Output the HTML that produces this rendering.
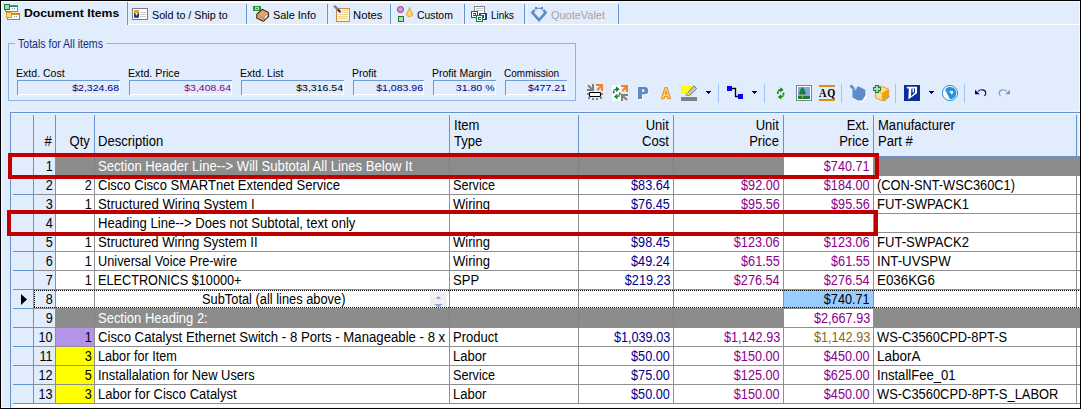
<!DOCTYPE html>
<html><head><meta charset="utf-8"><title>Document Items</title>
<style>
html,body{margin:0;padding:0;}
body{width:1081px;height:409px;overflow:hidden;background:#e1ecfd;font-family:"Liberation Sans",sans-serif;}
#r{position:relative;width:1081px;height:409px;overflow:hidden;background:#e1ecfd;}
#r>div,#r>span,#r>svg{position:absolute;display:block;}
#r>span{white-space:nowrap;}
</style></head><body><div id="r">
<div style="left:1px;top:2px;width:1px;height:406px;background:#f3f9ff;"></div>
<div style="left:1079px;top:1px;width:1px;height:407px;background:#f3f9ff;"></div>
<div style="left:1px;top:407px;width:1079px;height:1px;background:#f3f9ff;"></div>
<div style="left:1px;top:1px;width:1079px;height:1px;background:#f3f8fe;"></div>
<div style="left:1px;top:1px;width:126px;height:1px;background:#fdfcf4;"></div>
<div style="left:128px;top:2px;width:490px;height:1px;background:#ffffff;"></div>
<div style="left:129px;top:3px;width:489px;height:1px;background:#efebdf;"></div>
<div style="left:129px;top:24px;width:951px;height:1px;background:#ffffff;"></div>
<div style="left:129px;top:25px;width:951px;height:1px;background:#efebdf;"></div>
<div style="left:126px;top:3px;width:1px;height:22px;background:#eaf2fe;"></div>
<div style="left:128px;top:3px;width:1px;height:22px;background:#eaf2fe;"></div>
<div style="left:127px;top:2px;width:1px;height:23px;background:#6593cf;"></div>
<div style="left:245px;top:4px;width:1px;height:20px;background:#eaf2fe;"></div>
<div style="left:247px;top:4px;width:1px;height:20px;background:#eaf2fe;"></div>
<div style="left:246px;top:4px;width:1px;height:20px;background:#6593cf;"></div>
<div style="left:326px;top:4px;width:1px;height:20px;background:#eaf2fe;"></div>
<div style="left:328px;top:4px;width:1px;height:20px;background:#eaf2fe;"></div>
<div style="left:327px;top:4px;width:1px;height:20px;background:#6593cf;"></div>
<div style="left:389px;top:4px;width:1px;height:20px;background:#eaf2fe;"></div>
<div style="left:391px;top:4px;width:1px;height:20px;background:#eaf2fe;"></div>
<div style="left:390px;top:4px;width:1px;height:20px;background:#6593cf;"></div>
<div style="left:463px;top:4px;width:1px;height:20px;background:#eaf2fe;"></div>
<div style="left:465px;top:4px;width:1px;height:20px;background:#eaf2fe;"></div>
<div style="left:464px;top:4px;width:1px;height:20px;background:#6593cf;"></div>
<div style="left:523px;top:4px;width:1px;height:20px;background:#eaf2fe;"></div>
<div style="left:525px;top:4px;width:1px;height:20px;background:#eaf2fe;"></div>
<div style="left:524px;top:4px;width:1px;height:20px;background:#6593cf;"></div>
<div style="left:617px;top:4px;width:1px;height:20px;background:#eaf2fe;"></div>
<div style="left:619px;top:4px;width:1px;height:20px;background:#eaf2fe;"></div>
<div style="left:618px;top:4px;width:1px;height:20px;background:#6593cf;"></div>
<div style="left:249px;top:4px;width:1px;height:20px;background:#f1f6fe;"></div>
<div style="left:330px;top:4px;width:1px;height:20px;background:#f1f6fe;"></div>
<div style="left:393px;top:4px;width:1px;height:20px;background:#f1f6fe;"></div>
<div style="left:467px;top:4px;width:1px;height:20px;background:#f1f6fe;"></div>
<div style="left:527px;top:4px;width:1px;height:20px;background:#f1f6fe;"></div>
<span style="top:6px;font-size:11px;line-height:15px;color:#000;font-weight:bold;left:23.6px;transform-origin:0 0;transform:scaleX(1.1125);">Document Items</span>
<span style="top:8px;font-size:11px;line-height:15px;color:#000;left:151.8px;transform-origin:0 0;transform:scaleX(0.9735);">Sold to / Ship to</span>
<span style="top:8px;font-size:11px;line-height:15px;color:#000;left:272.6px;transform-origin:0 0;transform:scaleX(0.9903);">Sale Info</span>
<span style="top:8px;font-size:11px;line-height:15px;color:#000;left:352.8px;transform-origin:0 0;transform:scaleX(1.0231);">Notes</span>
<span style="top:8px;font-size:11px;line-height:15px;color:#000;left:416.8px;transform-origin:0 0;transform:scaleX(0.9446);">Custom</span>
<span style="top:8px;font-size:11px;line-height:15px;color:#000;left:490.5px;transform-origin:0 0;transform:scaleX(0.8957);">Links</span>
<span style="top:8px;font-size:11px;line-height:15px;color:#aaa39b;left:551px;transform-origin:0 0;transform:scaleX(0.9959);">QuoteValet</span>
<div style="left:8px;top:43px;width:1px;height:58px;background:#8db2e3;"></div>
<div style="left:575px;top:43px;width:1px;height:58px;background:#8db2e3;"></div>
<div style="left:8px;top:100px;width:568px;height:1px;background:#8db2e3;"></div>
<div style="left:8px;top:43px;width:7px;height:1px;background:#8db2e3;"></div>
<div style="left:106px;top:43px;width:470px;height:1px;background:#8db2e3;"></div>
<span style="top:36px;font-size:12px;line-height:17px;color:#0c2a78;left:18px;transform-origin:0 0;transform:scaleX(0.8780);">Totals for All items</span>
<span style="top:66px;font-size:11px;line-height:15px;color:#000;left:16.0px;transform-origin:0 0;transform:scaleX(0.9598);">Extd. Cost</span>
<div style="left:17px;top:80px;width:103px;height:15px;background:#e1ecfd;"></div>
<div style="left:17px;top:80px;width:103px;height:1px;background:#6f9bd6;"></div>
<div style="left:17px;top:80px;width:1px;height:15px;background:#6f9bd6;"></div>
<div style="left:18px;top:94px;width:102px;height:1px;background:#ffffff;"></div>
<div style="left:119px;top:81px;width:1px;height:14px;background:#ffffff;"></div>
<span style="top:81px;font-size:9.7px;line-height:14px;color:#00008b;right:962.3px;transform-origin:100% 0;transform:scaleX(1.0890);">$2,324.68</span>
<span style="top:66px;font-size:11px;line-height:15px;color:#000;left:128.0px;transform-origin:0 0;transform:scaleX(0.9702);">Extd. Price</span>
<div style="left:129px;top:80px;width:103px;height:15px;background:#e1ecfd;"></div>
<div style="left:129px;top:80px;width:103px;height:1px;background:#6f9bd6;"></div>
<div style="left:129px;top:80px;width:1px;height:15px;background:#6f9bd6;"></div>
<div style="left:130px;top:94px;width:102px;height:1px;background:#ffffff;"></div>
<div style="left:231px;top:81px;width:1px;height:14px;background:#ffffff;"></div>
<span style="top:81px;font-size:9.7px;line-height:14px;color:#8b008b;right:850.3px;transform-origin:100% 0;transform:scaleX(1.0890);">$3,408.64</span>
<span style="top:66px;font-size:11px;line-height:15px;color:#000;left:240.0px;transform-origin:0 0;transform:scaleX(0.9615);">Extd. List</span>
<div style="left:241px;top:80px;width:103px;height:15px;background:#e1ecfd;"></div>
<div style="left:241px;top:80px;width:103px;height:1px;background:#6f9bd6;"></div>
<div style="left:241px;top:80px;width:1px;height:15px;background:#6f9bd6;"></div>
<div style="left:242px;top:94px;width:102px;height:1px;background:#ffffff;"></div>
<div style="left:343px;top:81px;width:1px;height:14px;background:#ffffff;"></div>
<span style="top:81px;font-size:9.7px;line-height:14px;color:#000;right:738.3px;transform-origin:100% 0;transform:scaleX(1.0890);">$3,316.54</span>
<span style="top:66px;font-size:11px;line-height:15px;color:#000;left:352.0px;transform-origin:0 0;transform:scaleX(0.9504);">Profit</span>
<div style="left:353px;top:80px;width:71px;height:15px;background:#e1ecfd;"></div>
<div style="left:353px;top:80px;width:71px;height:1px;background:#6f9bd6;"></div>
<div style="left:353px;top:80px;width:1px;height:15px;background:#6f9bd6;"></div>
<div style="left:354px;top:94px;width:70px;height:1px;background:#ffffff;"></div>
<div style="left:423px;top:81px;width:1px;height:14px;background:#ffffff;"></div>
<span style="top:81px;font-size:9.7px;line-height:14px;color:#00008b;right:658.3px;transform-origin:100% 0;transform:scaleX(1.0890);">$1,083.96</span>
<span style="top:66px;font-size:11px;line-height:15px;color:#000;left:432.0px;transform-origin:0 0;transform:scaleX(0.9542);">Profit Margin</span>
<div style="left:433px;top:80px;width:63px;height:15px;background:#e1ecfd;"></div>
<div style="left:433px;top:80px;width:63px;height:1px;background:#6f9bd6;"></div>
<div style="left:433px;top:80px;width:1px;height:15px;background:#6f9bd6;"></div>
<div style="left:434px;top:94px;width:62px;height:1px;background:#ffffff;"></div>
<div style="left:495px;top:81px;width:1px;height:14px;background:#ffffff;"></div>
<span style="top:81px;font-size:9.7px;line-height:14px;color:#00008b;right:586.3px;transform-origin:100% 0;transform:scaleX(1.0890);">31.80 %</span>
<span style="top:66px;font-size:11px;line-height:15px;color:#000;left:504.0px;transform-origin:0 0;transform:scaleX(0.9122);">Commission</span>
<div style="left:505px;top:80px;width:62px;height:15px;background:#e1ecfd;"></div>
<div style="left:505px;top:80px;width:62px;height:1px;background:#6f9bd6;"></div>
<div style="left:505px;top:80px;width:1px;height:15px;background:#6f9bd6;"></div>
<div style="left:506px;top:94px;width:61px;height:1px;background:#ffffff;"></div>
<div style="left:566px;top:81px;width:1px;height:14px;background:#ffffff;"></div>
<span style="top:81px;font-size:9.7px;line-height:14px;color:#00008b;right:515.3px;transform-origin:100% 0;transform:scaleX(1.0890);">$477.21</span>
<div style="left:718px;top:84px;width:1px;height:19px;background:#a0c6f8;"></div>
<div style="left:764px;top:84px;width:1px;height:19px;background:#a0c6f8;"></div>
<div style="left:841px;top:84px;width:1px;height:19px;background:#a0c6f8;"></div>
<div style="left:895px;top:84px;width:1px;height:19px;background:#a0c6f8;"></div>
<div style="left:964px;top:84px;width:1px;height:19px;background:#a0c6f8;"></div>
<svg style="left:0;top:0" width="1081" height="409" viewBox="0 0 1081 409">
<!-- Document Items icon -->
<g shape-rendering="crispEdges">
<rect x="5.5" y="5.5" width="12" height="6" fill="#fff" stroke="#858585"/>
<rect x="10" y="6" width="7" height="1" fill="#1c8a52"/>
<rect x="12" y="8" width="1" height="1" fill="#8a8a8a"/><rect x="14" y="8" width="1" height="1" fill="#8a8a8a"/>
<rect x="4.5" y="4.5" width="5" height="5" fill="#a9d6ac" stroke="#168050"/>
<rect x="7.5" y="13.5" width="12" height="6" fill="#fff" stroke="#858585"/>
<rect x="12" y="14" width="7" height="1" fill="#e8960c"/>
<rect x="14" y="16" width="1" height="1" fill="#8a8a8a"/><rect x="16" y="16" width="1" height="1" fill="#8a8a8a"/>
<rect x="6.5" y="12.5" width="5" height="5" fill="#ffdf80" stroke="#e8960c"/>
</g>
<!-- Sold to card -->
<g shape-rendering="crispEdges">
<rect x="132.500" y="8.500" width="15" height="11" fill="#fff" stroke="#7d7d7d"/>
<rect x="140" y="12" width="6" height="1" fill="#c9c9c9"/><rect x="140" y="14" width="6" height="1" fill="#c9c9c9"/><rect x="140" y="16" width="6" height="1" fill="#c9c9c9"/>
<rect x="134" y="10" width="5" height="1" fill="#b9a88c"/>
<rect x="135" y="10" width="3" height="1" fill="#f0a830"/>
<rect x="134" y="11" width="5" height="2" fill="#f09c20"/>
<rect x="134" y="13" width="5" height="4" fill="#1c3c8c"/>
<path d="M135 13 L138 13 L136.500 15.800 Z" fill="#fbf3e6" shape-rendering="auto"/>
<rect x="134" y="17" width="5" height="1" fill="#8d95a8"/>
<rect x="135" y="17" width="3" height="1" fill="#4a5c94"/>
</g>
<!-- Sale Info: bill + box -->
<g>
<rect x="253" y="6" width="8" height="5" fill="#2f9442" shape-rendering="crispEdges"/>
<rect x="255" y="7" width="4" height="3" fill="#a6dba8" shape-rendering="crispEdges"/>
<rect x="256" y="8" width="2" height="1" fill="#2f9442" shape-rendering="crispEdges"/>
<path d="M262 9.300 L268.500 12.500 L268.500 16.500 L263.200 21.300 L256.700 18 L256.700 14.500 Z" fill="#dba878" stroke="#4a2a12" stroke-width="1.100" stroke-linejoin="round"/>
<path d="M256.700 14.500 L263.200 17.600 L268.500 12.500 M263.200 17.600 L263.200 21" fill="none" stroke="#c08858" stroke-width=".8"/>
<path d="M265 16.500 L267 14.600 L267 17 L265 19 Z" fill="#f4f4ec"/>
</g>
<!-- Notes -->
<g>
<rect x="336.500" y="8.500" width="13" height="13" fill="#fff6c4" stroke="#d08a3c" shape-rendering="crispEdges"/>
<g shape-rendering="crispEdges" fill="#ecd596">
<rect x="342" y="10" width="6" height="1"/><rect x="342" y="12" width="6" height="1"/><rect x="338" y="14" width="10" height="1"/><rect x="338" y="16" width="10" height="1"/><rect x="338" y="18" width="10" height="1"/></g>
<rect x="338" y="10" width="3.500" height="3" fill="#fff"/>
<path d="M334.800 6.400 L339 10.600" stroke="#808080" stroke-width="2.400" stroke-linecap="round"/>
<path d="M338.600 10.300 L340 11.700" stroke="#1c2c9c" stroke-width="2" stroke-linecap="round"/>
</g>
<!-- Custom -->
<g>
<circle cx="400.500" cy="9.500" r="3" fill="#d596d5" stroke="#942c94"/>
<rect x="398.500" y="16.500" width="5" height="5" fill="#b0dcb2" stroke="#167840" shape-rendering="crispEdges"/>
<path d="M409.500 7.500 C409.500 10 406.500 12.500 406.500 14.300 C406.500 15.800 407.800 16.600 409.500 16.600 C411.200 16.600 412.500 15.800 412.500 14.300 C412.500 12.500 409.500 10 409.500 7.500 Z" fill="#ffd878" stroke="#ea9a20"/>
</g>
<!-- Links -->
<g shape-rendering="crispEdges">
<rect x="474.500" y="6.500" width="10" height="9" fill="#fff" stroke="#858585"/>
<rect x="476" y="8" width="7" height="1" fill="#c4c4c4"/><rect x="476" y="10" width="7" height="1" fill="#c4c4c4"/>
<rect x="480" y="13.500" width="6" height="6" fill="#fff" stroke="#2c3a9a" stroke-width="1.200"/>
<rect x="483" y="15" width="1" height="3" fill="#2c3a9a"/><rect x="481.500" y="17" width="2" height="1" fill="#2c3a9a"/>
<rect x="471.500" y="11.500" width="6" height="6" fill="#fff" stroke="#cc1424" stroke-width="1.200"/>
<rect x="473" y="13" width="3" height="1" fill="#cc1424"/><rect x="473" y="15" width="3" height="1" fill="#cc1424"/><rect x="475" y="13" width="1" height="3" fill="#cc1424"/>
<rect x="476.500" y="15.500" width="6" height="6" fill="#fff" stroke="#108040" stroke-width="1.200"/>
<rect x="478" y="17" width="3" height="3" fill="#108040"/><rect x="479" y="18" width="2" height="1" fill="#fff"/>
</g>
<!-- QuoteValet -->
<g fill="none" stroke="#5a8ccc">
<path d="M534.500 10 L532.400 12.700 L539 20 L545.600 12.700 L543.500 10" stroke-width="2.600" stroke-linejoin="miter"/>
<path d="M536 8.300 L542 8.300" stroke-width="1"/>
<rect x="535" y="7" width="2" height="2.600" fill="#5a8ccc" stroke="none"/><rect x="541" y="7" width="2" height="2.600" fill="#5a8ccc" stroke="none"/>
</g>

<!-- Toolbar icon 1: fit -->
<g shape-rendering="crispEdges">
<rect x="592" y="84" width="2" height="7" fill="#808080"/><rect x="587" y="89" width="7" height="2" fill="#808080"/>
<rect x="596" y="84" width="7" height="2" fill="#f58220"/><rect x="601" y="84" width="2" height="7" fill="#f58220"/>
<rect x="589.500" y="92.500" width="11" height="4" rx=".8" fill="#fff" stroke="#000" stroke-width="1.150" shape-rendering="auto"/>
<g fill="#858585"><rect x="587" y="93" width="2" height="2"/><rect x="601" y="93" width="2" height="2"/>
<rect x="588" y="97" width="2" height="2"/><rect x="592" y="98" width="2" height="2"/><rect x="596" y="98" width="2" height="2"/><rect x="600" y="97" width="2" height="2"/></g>
</g>
<path d="M588 85.200 L592.500 89.700" stroke="#808080" stroke-width="2"/>
<path d="M597.300 90 L601.800 85.500" stroke="#f58220" stroke-width="2"/>
<!-- Toolbar icon 2 -->
<rect x="612" y="85" width="9" height="16" fill="#fff"/>
<g shape-rendering="crispEdges">
<rect x="621" y="85" width="7" height="2" fill="#f58220"/><rect x="626" y="85" width="2" height="7" fill="#f58220"/>
<rect x="621" y="94" width="7" height="2" fill="#808080"/><rect x="621" y="94" width="2" height="7" fill="#808080"/>
</g>
<path d="M622.300 91 L626.800 86.500" stroke="#f58220" stroke-width="2"/>
<path d="M622.500 95.500 L627 100" stroke="#808080" stroke-width="2"/>
<g fill="none" stroke="#128040" stroke-width="1.600">
<path d="M613.700 93.300 C613.300 90.800 614.300 89.200 616.500 89.200" stroke-dasharray="2.400 .5"/>
<path d="M619.800 92.500 C620.200 95.200 619.200 96.600 617 96.600" stroke-dasharray="2.400 .5"/>
</g>
<path d="M616 86.300 L619.600 89.200 L616 92.100 Z" fill="#128040"/>
<path d="M617.500 93.700 L613.900 96.600 L617.500 99.500 Z" fill="#128040"/>
<!-- P -->
<path d="M639 88 L645.500 88 C648 88 649.300 89.500 649.300 91.700 C649.300 94 648 95.300 645.500 95.300 L643 95.300 L643 100 L639 100 Z M643 90.600 L643 92.800 L644.600 92.800 C645.300 92.800 645.600 92.400 645.600 91.700 C645.600 91 645.300 90.600 644.600 90.600 Z" fill="#fff" fill-rule="evenodd"/>
<path d="M638 87 L644.500 87 C647 87 648.300 88.500 648.300 90.700 C648.300 93 647 94.300 644.500 94.300 L642 94.300 L642 99 L638 99 Z M642 89.600 L642 91.800 L643.600 91.800 C644.300 91.800 644.600 91.400 644.600 90.700 C644.600 90 644.300 89.600 643.600 89.600 Z" fill="#5a8cc8" fill-rule="evenodd"/>
<!-- A -->
<path d="M665 87.500 L667 87.500 L670.300 98.500 L667.800 98.500 L667.300 96.300 L664.700 96.300 L664.200 98.500 L661.600 98.500 Z M666 91 L665.300 94 L666.700 94 Z" fill="#ffe2a0" stroke="#f09422" stroke-width="1.250" fill-rule="evenodd" stroke-linejoin="round"/>
<!-- highlight -->
<rect x="681" y="85" width="10" height="9" fill="#ffff00" shape-rendering="crispEdges"/>
<rect x="681" y="97" width="16" height="4" fill="#808080" shape-rendering="crispEdges"/>
<path d="M693.800 85.800 L696.700 88.600 L690 95.200 L685.800 95.200 Z" fill="#c6c6c6" stroke="#7a7a7a" stroke-width="1" stroke-linejoin="round"/>
<path d="M686.200 94.800 L688 93 L689.700 94.700 Z" fill="#ffff00"/>
<!-- dropdown arrows -->
<g fill="#00006e" shape-rendering="crispEdges">
<path d="M706 91 h5 v1 h-1 v1 h-1 v1 h-1 v-1 h-1 v-1 h-1 Z"/>
<path d="M752 91 h5 v1 h-1 v1 h-1 v1 h-1 v-1 h-1 v-1 h-1 Z"/>
<path d="M929 91 h5 v1 h-1 v1 h-1 v1 h-1 v-1 h-1 v-1 h-1 Z"/>
</g>
<!-- connector -->
<g shape-rendering="crispEdges">
<rect x="727" y="86" width="5" height="5" fill="#0000ff"/><rect x="738" y="94" width="5" height="5" fill="#0000ff"/>
<path d="M732 88.500 H735.500 V96.500 H738" fill="none" stroke="#000" stroke-width="1.300" shape-rendering="auto"/>
</g>
<!-- refresh green -->
<g fill="none" stroke="#118a11" stroke-width="1.700">
<path d="M778 94 C777.400 91.200 778.800 89.800 781 89.800" stroke-dasharray="2.400 .5"/>
<path d="M783.400 92.600 C784 95.500 782.600 96.900 780.400 96.900" stroke-dasharray="2.400 .5"/>
</g>
<path d="M780.200 87.200 L783.600 89.800 L780.200 92.400 Z" fill="#118a11"/>
<path d="M781.200 94.300 L777.800 96.900 L781.200 99.500 Z" fill="#118a11"/>
<!-- picture -->
<g shape-rendering="crispEdges">
<rect x="796.500" y="85.500" width="15" height="15" fill="#fff" stroke="#808080"/>
<rect x="798" y="87" width="12" height="9" fill="#80a8e0"/>
<rect x="798" y="96" width="12" height="3" fill="#0e8040"/>
<rect x="802" y="93" width="1" height="5" fill="#f09020"/>
</g>
<path d="M802.500 87 L805 90 L804.300 90 L806 93 L805 94.500 L800 94.500 L799 93 L800.700 90 L800 90 Z" fill="#108040"/>
<rect x="802" y="94.500" width="1" height="3.500" fill="#f09020"/>
<!-- AQ -->
<rect x="819" y="85" width="16" height="2" fill="#e08818" shape-rendering="crispEdges"/>
<rect x="819" y="99" width="16" height="2" fill="#e08818" shape-rendering="crispEdges"/>
<!-- hand -->
<g transform="translate(1,1)" fill="#fff" stroke="#fff">
<path d="M851.300 86.300 L854.500 89.500" stroke-width="2.800" stroke-linecap="round"/>
<path d="M852.500 90 L855.500 90.500 L857.500 86.300 L861 87.500 L865.500 90 L865.500 95.500 L862 100.500 L858 100.500 L852.500 97.500 Z" stroke-width=".5"/>
</g>
<path d="M851.300 86.300 L855 90" stroke="#5a8cc8" stroke-width="2.800" stroke-linecap="round"/>
<path d="M852.500 90 L855.500 91 L857.500 86.300 L861 87.500 L865.500 90 L865.500 95.500 L862 100.500 L858 100.500 L852.500 97.500 Z" fill="#5a8cc8"/>
<path d="M853.600 88 L856 90.300" stroke="#e8f0fd" stroke-width=".9"/>
<!-- box with plus -->
<path d="M884 101.500 L890 96.500 L889 96 L883 101 Z" fill="#8a8a8a"/>
<path d="M880 86 L888.500 89 L888.500 96 L882 100.800 L875.500 97.700 L875.500 89.500 Z" fill="#ffe08a" stroke="#f09820" stroke-width="1" stroke-linejoin="round"/>
<path d="M882 93 L888.500 89 L888.500 96 L882 100.800 Z" fill="#f0a010"/>
<path d="M875.500 89.500 L882 93" stroke="#f0a820" stroke-width=".8" fill="none"/>
<path d="M875.500 85.500 h3 v2 h2 v3 h-2 v2 h-3 v-2 h-2 v-3 h2 Z" fill="#b4dcb6" stroke="#128040" stroke-width="1" shape-rendering="crispEdges"/>
<!-- D&H -->
<rect x="904" y="85" width="16" height="16" fill="#0a2d9c" shape-rendering="crispEdges"/>
<path d="M906.800 86.800 L917 86.800 L917 93.300 L908.300 99.500 L908.800 88.600 L906.800 88.600 Z" fill="#fff"/>
<path d="M911.400 88.600 L915 88.600 L915 92.500 L911 96.300 Z" fill="#0a2d9c"/>
<rect x="912.500" y="88.500" width="1.500" height="3.800" fill="#fff"/>
<!-- circle D -->
<circle cx="950" cy="93" r="7.600" fill="#fff" stroke="#2a90d8" stroke-width="1"/>
<path d="M945.200 89.700 C946.500 87.500 948.500 87 950.500 87 C954 87 956.300 89.800 956.300 93 C956.300 96 954.500 98.400 951.500 99.200 C950.800 99.400 950 99.300 949.600 98.700 Z" fill="#2a90d8"/>
<path d="M949.200 91.200 L952.300 91 C953 91 953.300 91.600 953.100 92.300 L952 94.800 Z" fill="#fff"/>
<!-- undo / redo -->
<path d="M978 91.300 C980.500 89 985.300 89.300 985.800 92.800 C986 94.300 985.300 95.300 984.300 95.800" fill="none" stroke="#00006e" stroke-width="1.100"/>
<path d="M975 89.800 L975 94.300 L979.800 94.300 Z" fill="#00006e"/>
<path d="M1007 91.300 C1004.500 89 999.700 89.300 999.200 92.800 C999 94.300 999.700 95.300 1000.700 95.800" fill="none" stroke="#6f9bd5" stroke-width="1.100"/>
<path d="M1010 89.800 L1010 94.300 L1005.200 94.300 Z" fill="#6f9bd5"/>
</svg>
<span style="left:819.200px;top:86px;font-family:'Liberation Serif',serif;font-weight:bold;font-size:11.500px;line-height:14px;color:#000;letter-spacing:1px;transform-origin:0 0;transform:scale(0.9,1)">AQ</span>

<div style="left:56px;top:157px;width:1024px;height:250px;background:#fff;"></div>
<div style="left:13px;top:404px;width:1067px;height:3px;background:#fff;"></div>
<div style="left:10px;top:111px;width:1070px;height:1px;background:#eaf3fe;"></div>
<div style="left:11px;top:113px;width:1069px;height:1px;background:#eaf3fe;"></div>
<div style="left:10px;top:112px;width:1070px;height:1px;background:#6593cf;"></div>
<div style="left:10px;top:112px;width:1px;height:296px;background:#6593cf;"></div>
<div style="left:33px;top:115px;width:1px;height:41px;background:#6593cf;"></div>
<div style="left:55px;top:115px;width:1px;height:41px;background:#6593cf;"></div>
<div style="left:94px;top:115px;width:1px;height:41px;background:#6593cf;"></div>
<div style="left:449px;top:115px;width:1px;height:41px;background:#6593cf;"></div>
<div style="left:578px;top:115px;width:1px;height:41px;background:#6593cf;"></div>
<div style="left:673px;top:115px;width:1px;height:41px;background:#6593cf;"></div>
<div style="left:783px;top:115px;width:1px;height:41px;background:#6593cf;"></div>
<div style="left:873px;top:115px;width:1px;height:41px;background:#6593cf;"></div>
<div style="left:1076px;top:115px;width:1px;height:41px;background:#6593cf;"></div>
<div style="left:11px;top:156px;width:1069px;height:1px;background:#6593cf;"></div>
<div style="left:33px;top:157px;width:1px;height:247px;background:#6593cf;"></div>
<div style="left:56px;top:157px;width:818px;height:18px;background:#8c8c8c;"></div>
<div style="left:874px;top:157px;width:206px;height:18px;background:#8c8c8c;"></div>
<div style="left:784px;top:157px;width:89px;height:18px;background:#fff;"></div>
<div style="left:784px;top:290px;width:89px;height:18px;background:#99ccff;"></div>
<div style="left:56px;top:309px;width:818px;height:18px;background:#8c8c8c;"></div>
<div style="left:874px;top:309px;width:206px;height:18px;background:#8c8c8c;"></div>
<div style="left:784px;top:309px;width:89px;height:18px;background:#fff;"></div>
<div style="left:56px;top:328px;width:38px;height:18px;background:#b494e8;"></div>
<div style="left:56px;top:347px;width:38px;height:18px;background:#ffff00;"></div>
<div style="left:56px;top:366px;width:38px;height:18px;background:#ffff00;"></div>
<div style="left:56px;top:385px;width:38px;height:18px;background:#ffff00;"></div>
<div style="left:13px;top:175px;width:21px;height:1px;background:#6593cf;"></div>
<div style="left:34px;top:175px;width:1046px;height:1px;background:#8f8f8f;"></div>
<div style="left:13px;top:194px;width:21px;height:1px;background:#6593cf;"></div>
<div style="left:34px;top:194px;width:1046px;height:1px;background:#8f8f8f;"></div>
<div style="left:13px;top:213px;width:21px;height:1px;background:#6593cf;"></div>
<div style="left:34px;top:213px;width:1046px;height:1px;background:#8f8f8f;"></div>
<div style="left:13px;top:232px;width:21px;height:1px;background:#6593cf;"></div>
<div style="left:34px;top:232px;width:1046px;height:1px;background:#8f8f8f;"></div>
<div style="left:13px;top:251px;width:21px;height:1px;background:#6593cf;"></div>
<div style="left:34px;top:251px;width:1046px;height:1px;background:#8f8f8f;"></div>
<div style="left:13px;top:270px;width:21px;height:1px;background:#6593cf;"></div>
<div style="left:34px;top:270px;width:1046px;height:1px;background:#8f8f8f;"></div>
<div style="left:13px;top:289px;width:21px;height:1px;background:#6593cf;"></div>
<div style="left:34px;top:289px;width:1046px;height:1px;background:#8f8f8f;"></div>
<div style="left:13px;top:308px;width:21px;height:1px;background:#6593cf;"></div>
<div style="left:34px;top:308px;width:1046px;height:1px;background:#8f8f8f;"></div>
<div style="left:13px;top:327px;width:21px;height:1px;background:#6593cf;"></div>
<div style="left:34px;top:327px;width:1046px;height:1px;background:#8f8f8f;"></div>
<div style="left:13px;top:346px;width:21px;height:1px;background:#6593cf;"></div>
<div style="left:34px;top:346px;width:1046px;height:1px;background:#8f8f8f;"></div>
<div style="left:13px;top:365px;width:21px;height:1px;background:#6593cf;"></div>
<div style="left:34px;top:365px;width:1046px;height:1px;background:#8f8f8f;"></div>
<div style="left:13px;top:384px;width:21px;height:1px;background:#6593cf;"></div>
<div style="left:34px;top:384px;width:1046px;height:1px;background:#8f8f8f;"></div>
<div style="left:13px;top:403px;width:21px;height:1px;background:#6593cf;"></div>
<div style="left:34px;top:403px;width:1046px;height:1px;background:#8f8f8f;"></div>
<div style="left:55px;top:157px;width:1px;height:247px;background:#8f8f8f;"></div>
<div style="left:94px;top:157px;width:1px;height:247px;background:#8f8f8f;"></div>
<div style="left:449px;top:157px;width:1px;height:247px;background:#8f8f8f;"></div>
<div style="left:578px;top:157px;width:1px;height:247px;background:#8f8f8f;"></div>
<div style="left:673px;top:157px;width:1px;height:247px;background:#8f8f8f;"></div>
<div style="left:783px;top:157px;width:1px;height:247px;background:#8f8f8f;"></div>
<div style="left:873px;top:157px;width:1px;height:247px;background:#8f8f8f;"></div>
<div style="left:1076px;top:157px;width:1px;height:247px;background:#8f8f8f;"></div>
<div style="left:94px;top:157px;width:1px;height:18px;background:#828282;"></div>
<div style="left:449px;top:157px;width:1px;height:18px;background:#828282;"></div>
<div style="left:578px;top:157px;width:1px;height:18px;background:#828282;"></div>
<div style="left:673px;top:157px;width:1px;height:18px;background:#828282;"></div>
<div style="left:94px;top:309px;width:1px;height:18px;background:#828282;"></div>
<div style="left:449px;top:309px;width:1px;height:18px;background:#828282;"></div>
<div style="left:578px;top:309px;width:1px;height:18px;background:#828282;"></div>
<div style="left:673px;top:309px;width:1px;height:18px;background:#828282;"></div>
<span style="top:156px;font-size:14px;line-height:20px;color:#000;right:1028.6px;transform-origin:100% 0;transform:scaleX(0.9050);">1</span>
<span style="top:156px;font-size:14px;line-height:20px;color:#fff;left:98px;transform-origin:0 0;transform:scaleX(0.9363);">Section Header Line--&gt; Will Subtotal All Lines Below It</span>
<span style="top:156px;font-size:14px;line-height:20px;color:#8b008b;right:211px;transform-origin:100% 0;transform:scaleX(0.9050);">$740.71</span>
<span style="top:175px;font-size:14px;line-height:20px;color:#000;right:1028.6px;transform-origin:100% 0;transform:scaleX(0.9050);">2</span>
<span style="top:175px;font-size:14px;line-height:20px;color:#000;right:989.6px;transform-origin:100% 0;transform:scaleX(0.9050);">2</span>
<span style="top:175px;font-size:14px;line-height:20px;color:#000;left:98px;transform-origin:0 0;transform:scaleX(0.9321);">Cisco Cisco SMARTnet Extended Service</span>
<span style="top:175px;font-size:14px;line-height:20px;color:#000;left:453px;transform-origin:0 0;transform:scaleX(0.9000);">Service</span>
<span style="top:175px;font-size:14px;line-height:20px;color:#00008b;right:410.79999999999995px;transform-origin:100% 0;transform:scaleX(0.9050);">$83.64</span>
<span style="top:175px;font-size:14px;line-height:20px;color:#8b008b;right:301.20000000000005px;transform-origin:100% 0;transform:scaleX(0.9050);">$92.00</span>
<span style="top:175px;font-size:14px;line-height:20px;color:#8b008b;right:211px;transform-origin:100% 0;transform:scaleX(0.9050);">$184.00</span>
<span style="top:175px;font-size:14px;line-height:20px;color:#000;left:877.2px;transform-origin:0 0;transform:scaleX(0.9138);">(CON-SNT-WSC360C1)</span>
<span style="top:194px;font-size:14px;line-height:20px;color:#000;right:1028.6px;transform-origin:100% 0;transform:scaleX(0.9050);">3</span>
<span style="top:194px;font-size:14px;line-height:20px;color:#000;right:989.6px;transform-origin:100% 0;transform:scaleX(0.9050);">1</span>
<span style="top:194px;font-size:14px;line-height:20px;color:#000;left:98px;transform-origin:0 0;transform:scaleX(0.9406);">Structured Wiring System I</span>
<span style="top:194px;font-size:14px;line-height:20px;color:#000;left:453px;transform-origin:0 0;transform:scaleX(0.9320);">Wiring</span>
<span style="top:194px;font-size:14px;line-height:20px;color:#00008b;right:410.79999999999995px;transform-origin:100% 0;transform:scaleX(0.9050);">$76.45</span>
<span style="top:194px;font-size:14px;line-height:20px;color:#8b008b;right:301.20000000000005px;transform-origin:100% 0;transform:scaleX(0.9050);">$95.56</span>
<span style="top:194px;font-size:14px;line-height:20px;color:#8b008b;right:211px;transform-origin:100% 0;transform:scaleX(0.9050);">$95.56</span>
<span style="top:194px;font-size:14px;line-height:20px;color:#000;left:877.2px;transform-origin:0 0;transform:scaleX(0.9338);">FUT-SWPACK1</span>
<span style="top:213px;font-size:14px;line-height:20px;color:#000;right:1028.6px;transform-origin:100% 0;transform:scaleX(0.9050);">4</span>
<span style="top:213px;font-size:14px;line-height:20px;color:#000;left:98px;transform-origin:0 0;transform:scaleX(0.9356);">Heading Line--&gt; Does not Subtotal, text only</span>
<span style="top:232px;font-size:14px;line-height:20px;color:#000;right:1028.6px;transform-origin:100% 0;transform:scaleX(0.9050);">5</span>
<span style="top:232px;font-size:14px;line-height:20px;color:#000;right:989.6px;transform-origin:100% 0;transform:scaleX(0.9050);">1</span>
<span style="top:232px;font-size:14px;line-height:20px;color:#000;left:98px;transform-origin:0 0;transform:scaleX(0.9367);">Structured Wiring System II</span>
<span style="top:232px;font-size:14px;line-height:20px;color:#000;left:453px;transform-origin:0 0;transform:scaleX(0.9320);">Wiring</span>
<span style="top:232px;font-size:14px;line-height:20px;color:#00008b;right:410.79999999999995px;transform-origin:100% 0;transform:scaleX(0.9050);">$98.45</span>
<span style="top:232px;font-size:14px;line-height:20px;color:#8b008b;right:301.20000000000005px;transform-origin:100% 0;transform:scaleX(0.9050);">$123.06</span>
<span style="top:232px;font-size:14px;line-height:20px;color:#8b008b;right:211px;transform-origin:100% 0;transform:scaleX(0.9050);">$123.06</span>
<span style="top:232px;font-size:14px;line-height:20px;color:#000;left:877.2px;transform-origin:0 0;transform:scaleX(0.9338);">FUT-SWPACK2</span>
<span style="top:251px;font-size:14px;line-height:20px;color:#000;right:1028.6px;transform-origin:100% 0;transform:scaleX(0.9050);">6</span>
<span style="top:251px;font-size:14px;line-height:20px;color:#000;right:989.6px;transform-origin:100% 0;transform:scaleX(0.9050);">1</span>
<span style="top:251px;font-size:14px;line-height:20px;color:#000;left:98px;transform-origin:0 0;transform:scaleX(0.9115);">Universal Voice Pre-wire</span>
<span style="top:251px;font-size:14px;line-height:20px;color:#000;left:453px;transform-origin:0 0;transform:scaleX(0.9320);">Wiring</span>
<span style="top:251px;font-size:14px;line-height:20px;color:#00008b;right:410.79999999999995px;transform-origin:100% 0;transform:scaleX(0.9050);">$49.24</span>
<span style="top:251px;font-size:14px;line-height:20px;color:#8b008b;right:301.20000000000005px;transform-origin:100% 0;transform:scaleX(0.9050);">$61.55</span>
<span style="top:251px;font-size:14px;line-height:20px;color:#8b008b;right:211px;transform-origin:100% 0;transform:scaleX(0.9050);">$61.55</span>
<span style="top:251px;font-size:14px;line-height:20px;color:#000;left:877.2px;transform-origin:0 0;transform:scaleX(0.9475);">INT-UVSPW</span>
<span style="top:270px;font-size:14px;line-height:20px;color:#000;right:1028.6px;transform-origin:100% 0;transform:scaleX(0.9050);">7</span>
<span style="top:270px;font-size:14px;line-height:20px;color:#000;right:989.6px;transform-origin:100% 0;transform:scaleX(0.9050);">1</span>
<span style="top:270px;font-size:14px;line-height:20px;color:#000;left:98px;transform-origin:0 0;transform:scaleX(0.9062);">ELECTRONICS $10000+</span>
<span style="top:270px;font-size:14px;line-height:20px;color:#000;left:453px;transform-origin:0 0;transform:scaleX(0.9320);">SPP</span>
<span style="top:270px;font-size:14px;line-height:20px;color:#00008b;right:410.79999999999995px;transform-origin:100% 0;transform:scaleX(0.9050);">$219.23</span>
<span style="top:270px;font-size:14px;line-height:20px;color:#8b008b;right:301.20000000000005px;transform-origin:100% 0;transform:scaleX(0.9050);">$276.54</span>
<span style="top:270px;font-size:14px;line-height:20px;color:#8b008b;right:211px;transform-origin:100% 0;transform:scaleX(0.9050);">$276.54</span>
<span style="top:270px;font-size:14px;line-height:20px;color:#000;left:877.2px;transform-origin:0 0;transform:scaleX(0.9537);">E036KG6</span>
<span style="top:289px;font-size:14px;line-height:20px;color:#000;right:1028.6px;transform-origin:100% 0;transform:scaleX(0.9050);">8</span>
<span style="top:289px;font-size:14px;line-height:20px;color:#000;right:211px;transform-origin:100% 0;transform:scaleX(0.9050);">$740.71</span>
<span style="top:308px;font-size:14px;line-height:20px;color:#000;right:1028.6px;transform-origin:100% 0;transform:scaleX(0.9050);">9</span>
<span style="top:308px;font-size:14px;line-height:20px;color:#fff;left:98px;transform-origin:0 0;transform:scaleX(0.9273);">Section Heading 2:</span>
<span style="top:308px;font-size:14px;line-height:20px;color:#8b008b;right:211px;transform-origin:100% 0;transform:scaleX(0.9050);">$2,667.93</span>
<span style="top:327px;font-size:14px;line-height:20px;color:#000;right:1028.6px;transform-origin:100% 0;transform:scaleX(0.9050);">10</span>
<span style="top:327px;font-size:14px;line-height:20px;color:#000;right:989.6px;transform-origin:100% 0;transform:scaleX(0.9050);">1</span>
<span style="top:327px;font-size:14px;line-height:20px;color:#000;left:98px;transform-origin:0 0;transform:scaleX(0.9414);">Cisco Catalyst Ethernet Switch - 8 Ports - Manageable - 8 x</span>
<span style="top:327px;font-size:14px;line-height:20px;color:#000;left:453px;transform-origin:0 0;transform:scaleX(0.9320);">Product</span>
<span style="top:327px;font-size:14px;line-height:20px;color:#00008b;right:410.79999999999995px;transform-origin:100% 0;transform:scaleX(0.9050);">$1,039.03</span>
<span style="top:327px;font-size:14px;line-height:20px;color:#8b008b;right:301.20000000000005px;transform-origin:100% 0;transform:scaleX(0.9050);">$1,142.93</span>
<span style="top:327px;font-size:14px;line-height:20px;color:#8b6914;right:211px;transform-origin:100% 0;transform:scaleX(0.9050);">$1,142.93</span>
<span style="top:327px;font-size:14px;line-height:20px;color:#000;left:877.2px;transform-origin:0 0;transform:scaleX(0.9188);">WS-C3560CPD-8PT-S</span>
<span style="top:346px;font-size:14px;line-height:20px;color:#000;right:1028.6px;transform-origin:100% 0;transform:scaleX(0.9050);">11</span>
<span style="top:346px;font-size:14px;line-height:20px;color:#000;right:989.6px;transform-origin:100% 0;transform:scaleX(0.9050);">3</span>
<span style="top:346px;font-size:14px;line-height:20px;color:#000;left:98px;transform-origin:0 0;transform:scaleX(0.9042);">Labor for Item</span>
<span style="top:346px;font-size:14px;line-height:20px;color:#000;left:453px;transform-origin:0 0;transform:scaleX(0.9320);">Labor</span>
<span style="top:346px;font-size:14px;line-height:20px;color:#00008b;right:410.79999999999995px;transform-origin:100% 0;transform:scaleX(0.9050);">$50.00</span>
<span style="top:346px;font-size:14px;line-height:20px;color:#8b008b;right:301.20000000000005px;transform-origin:100% 0;transform:scaleX(0.9050);">$150.00</span>
<span style="top:346px;font-size:14px;line-height:20px;color:#8b008b;right:211px;transform-origin:100% 0;transform:scaleX(0.9050);">$450.00</span>
<span style="top:346px;font-size:14px;line-height:20px;color:#000;left:877.2px;transform-origin:0 0;transform:scaleX(0.9658);">LaborA</span>
<span style="top:365px;font-size:14px;line-height:20px;color:#000;right:1028.6px;transform-origin:100% 0;transform:scaleX(0.9050);">12</span>
<span style="top:365px;font-size:14px;line-height:20px;color:#000;right:989.6px;transform-origin:100% 0;transform:scaleX(0.9050);">5</span>
<span style="top:365px;font-size:14px;line-height:20px;color:#000;left:98px;transform-origin:0 0;transform:scaleX(0.9196);">Installalation for New Users</span>
<span style="top:365px;font-size:14px;line-height:20px;color:#000;left:453px;transform-origin:0 0;transform:scaleX(0.9000);">Service</span>
<span style="top:365px;font-size:14px;line-height:20px;color:#00008b;right:410.79999999999995px;transform-origin:100% 0;transform:scaleX(0.9050);">$75.00</span>
<span style="top:365px;font-size:14px;line-height:20px;color:#8b008b;right:301.20000000000005px;transform-origin:100% 0;transform:scaleX(0.9050);">$125.00</span>
<span style="top:365px;font-size:14px;line-height:20px;color:#8b008b;right:211px;transform-origin:100% 0;transform:scaleX(0.9050);">$625.00</span>
<span style="top:365px;font-size:14px;line-height:20px;color:#000;left:877.2px;transform-origin:0 0;transform:scaleX(0.9351);">InstallFee_01</span>
<span style="top:384px;font-size:14px;line-height:20px;color:#000;right:1028.6px;transform-origin:100% 0;transform:scaleX(0.9050);">13</span>
<span style="top:384px;font-size:14px;line-height:20px;color:#000;right:989.6px;transform-origin:100% 0;transform:scaleX(0.9050);">3</span>
<span style="top:384px;font-size:14px;line-height:20px;color:#000;left:98px;transform-origin:0 0;transform:scaleX(0.9278);">Labor for Cisco Catalyst</span>
<span style="top:384px;font-size:14px;line-height:20px;color:#000;left:453px;transform-origin:0 0;transform:scaleX(0.9320);">Labor</span>
<span style="top:384px;font-size:14px;line-height:20px;color:#00008b;right:410.79999999999995px;transform-origin:100% 0;transform:scaleX(0.9050);">$50.00</span>
<span style="top:384px;font-size:14px;line-height:20px;color:#8b008b;right:301.20000000000005px;transform-origin:100% 0;transform:scaleX(0.9050);">$150.00</span>
<span style="top:384px;font-size:14px;line-height:20px;color:#8b008b;right:211px;transform-origin:100% 0;transform:scaleX(0.9050);">$450.00</span>
<span style="top:384px;font-size:14px;line-height:20px;color:#000;left:877.2px;transform-origin:0 0;transform:scaleX(0.9215);">WS-C3560CPD-8PT-S_LABOR</span>
<span style="top:289px;font-size:14px;line-height:20px;color:#000;left:202.2px;transform-origin:0 0;transform:scaleX(0.9168);">SubTotal (all lines above)</span>
<span style="top:131px;font-size:14px;line-height:20px;color:#000;right:1029.6px;transform-origin:100% 0;transform:scaleX(0.9320);">#</span>
<span style="top:131px;font-size:14px;line-height:20px;color:#000;right:991.4px;transform-origin:100% 0;transform:scaleX(0.9320);">Qty</span>
<span style="top:131px;font-size:14px;line-height:20px;color:#000;left:98.4px;transform-origin:0 0;transform:scaleX(0.9320);">Description</span>
<span style="top:115px;font-size:14px;line-height:20px;color:#000;left:454px;transform-origin:0 0;transform:scaleX(0.9320);">Item</span>
<span style="top:131px;font-size:14px;line-height:20px;color:#000;left:453.6px;transform-origin:0 0;transform:scaleX(0.9320);">Type</span>
<span style="top:115px;font-size:14px;line-height:20px;color:#000;right:412.20000000000005px;transform-origin:100% 0;transform:scaleX(0.9320);">Unit</span>
<span style="top:131px;font-size:14px;line-height:20px;color:#000;right:412.20000000000005px;transform-origin:100% 0;transform:scaleX(0.9320);">Cost</span>
<span style="top:115px;font-size:14px;line-height:20px;color:#000;right:302.20000000000005px;transform-origin:100% 0;transform:scaleX(0.9320);">Unit</span>
<span style="top:131px;font-size:14px;line-height:20px;color:#000;right:302.20000000000005px;transform-origin:100% 0;transform:scaleX(0.9320);">Price</span>
<span style="top:115px;font-size:14px;line-height:20px;color:#000;right:212.20000000000005px;transform-origin:100% 0;transform:scaleX(0.9320);">Ext.</span>
<span style="top:131px;font-size:14px;line-height:20px;color:#000;right:212.20000000000005px;transform-origin:100% 0;transform:scaleX(0.9320);">Price</span>
<span style="top:115px;font-size:14px;line-height:20px;color:#000;left:877.8px;transform-origin:0 0;transform:scaleX(0.9320);">Manufacturer</span>
<span style="top:131px;font-size:14px;line-height:20px;color:#000;left:877.8px;transform-origin:0 0;transform:scaleX(0.9320);">Part #</span>
<div style="left:34px;top:290px;width:1046px;height:1px;background:repeating-linear-gradient(90deg,#000 0 1px,transparent 1px 2px)"></div>
<div style="left:34px;top:307px;width:1046px;height:1px;background:repeating-linear-gradient(90deg,#000 0 1px,transparent 1px 2px)"></div>
<div style="left:34px;top:290px;width:1px;height:18px;background:repeating-linear-gradient(180deg,#000 0 1px,transparent 1px 2px)"></div>
<svg style="left:21px;top:294px" width="7" height="11" viewBox="0 0 7 11"><path d="M0 0 L6 5.5 L0 11 Z" fill="#000"/></svg>
<div style="left:430px;top:292px;width:17px;height:15px;background:#f0f0f0;"></div>
<svg style="left:430px;top:292px" width="17" height="16" viewBox="0 0 17 16"><path d="M6 7 L8.5 4 L11 7 Z" fill="#93a8dc"/><path d="M4 12 L13 12 L8.5 15.5 Z" fill="#93a8dc"/></svg>
<div style="left:8px;top:153px;width:863px;height:18px;border:4px solid #c00000;box-sizing:content-box"></div>
<div style="left:7px;top:210px;width:863px;height:18px;border:4px solid #c00000;box-sizing:content-box"></div>
<div style="left:0px;top:0px;width:1081px;height:1px;background:#000;"></div>
<div style="left:0px;top:0px;width:1px;height:409px;background:#000;"></div>
<div style="left:1080px;top:0px;width:1px;height:409px;background:#000;"></div>
<div style="left:0px;top:408px;width:1081px;height:1px;background:#000;"></div>
</div></body></html>
